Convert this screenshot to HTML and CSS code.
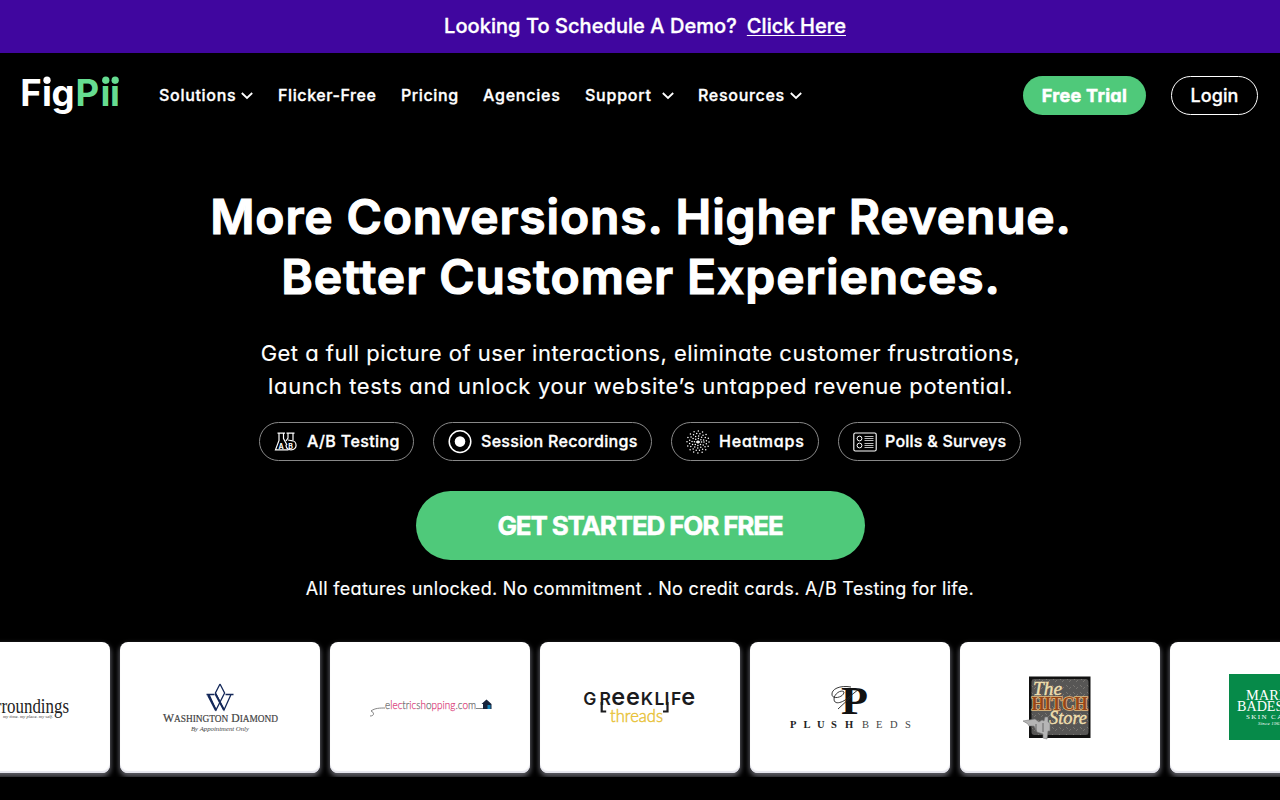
FILE: index.html
```html
<!DOCTYPE html>
<html lang="en">
<head>
<meta charset="utf-8">
<title>FigPii</title>
<link rel="stylesheet" href="styles.css">
</head>
<body>
<div class="banner"><span class="b1">Looking To Schedule A Demo?</span><a class="b2">Click Here</a></div>
<header class="header">
  <svg class="logo" width="100" height="42" viewBox="0 0 100 42">
    <text x="-1.800 19.900 29.400" y="30.500" fill="#fff">Fig</text><text x="53.500 78.600 87.900" y="30.500" fill="#66dc90">Pii</text>
    <circle cx="25" cy="5.200" r="3.600" fill="#fff"/><circle cx="83.800" cy="5.200" r="3.600" fill="#66dc90"/><circle cx="93.200" cy="5.200" r="3.600" fill="#66dc90"/>
  </svg>
  <nav class="nav">
    <a class="n1"><span>Solutions</span><svg class="chev" viewBox="0 0 12 8"><path d="M.8 1l5.200 5 5.200-5"/></svg></a>
    <a class="n2"><span>Flicker-Free</span></a>
    <a class="n3"><span>Pricing</span></a>
    <a class="n4"><span>Agencies</span></a>
    <a class="n5"><span>Support</span><svg class="chev" viewBox="0 0 12 8"><path d="M.8 1l5.200 5 5.200-5"/></svg></a>
    <a class="n6"><span>Resources</span><svg class="chev" viewBox="0 0 12 8"><path d="M.8 1l5.200 5 5.200-5"/></svg></a>
  </nav>
  <a class="trial">Free Trial</a>
  <a class="login">Login</a>
</header>
<main class="hero">
  <h1><span class="h1a">More Conversions. Higher Revenue.</span><br><span class="h1b">Better Customer Experiences.</span></h1>
  <p class="lead"><span class="l1">Get a full picture of user interactions, eliminate customer frustrations,</span><br><span class="l2">launch tests and unlock your website’s untapped revenue potential.</span></p>
  <div class="pills">
    <a class="pill p1">
      <svg width="24" height="24" viewBox="0 0 24 24" fill="none" stroke="#fff" stroke-width="1.200"><path d="M3.500 3.200h7.500M5 3.500v7L1.500 19.800h13M9.500 3.500v5L13 15M12.500 3.200h8M14 3.500v4.500L12 11M19 3.500v7"/><path d="M17 10.500c6.500 0 7 9.300 0 9.300-3 0-5-2-5-5M14 10l5 1"/><text x="4.600" y="18.700">A</text><text x="14.300" y="18.700">B</text></svg>
      <span>A/B Testing</span></a>
    <a class="pill p2">
      <svg width="24" height="24" viewBox="0 0 24 24"><circle cx="12" cy="11.600" r="10.800" fill="none" stroke="#fff" stroke-width="1.500"/><circle cx="12" cy="11.600" r="5.300" fill="#fff"/></svg>
      <span>Session Recordings</span></a>
    <a class="pill p3">
      <svg width="24" height="24" viewBox="0 0 24 24" fill="none" stroke="#fff" stroke-linecap="round" stroke-width="1.500"><circle cx="12" cy="12" r="11" stroke-dasharray="0 4.320"/><circle cx="12" cy="12" r="8.500" stroke-dasharray="0 3.338" stroke-dashoffset="1.600"/><circle cx="12" cy="12" r="6" stroke-dasharray="0 3.142"/><circle cx="12" cy="12" r="3.600" stroke-dasharray="0 2.827"/><path d="M12 11v2M10.500 12h3"/></svg>
      <span>Heatmaps</span></a>
    <a class="pill p4">
      <svg width="24" height="24" viewBox="0 0 24 24" fill="none" stroke="#fff"><rect x=".8" y="3" width="22.400" height="18" rx="1.500" stroke-width="1.100"/><circle cx="6.500" cy="8.500" r="2.400"/><circle cx="6.500" cy="15.500" r="2.400"/><path stroke="#bbb" d="M11.500 6.500h9M11.500 8.500h9M11.500 10.500h9M11.500 13.500h9M11.500 15.500h9M11.500 17.500h9"/></svg>
      <span>Polls &amp; Surveys</span></a>
  </div>
  <a class="cta">GET STARTED FOR FREE</a>
  <p class="note">All features unlocked. No commitment . No credit cards. A/B Testing for life.</p>
</main>
<section class="clients">
  <div class="card"><svg viewBox="0 0 200 131"><text class="serif" x="68" y="70.500" font-size="21" textLength="91" lengthAdjust="spacingAndGlyphs" fill="#222">Surroundings</text><text class="serif it" x="93" y="75.500" font-size="4.500" textLength="50" fill="#333">my time.  my place.  my self.</text></svg></div>
  <div class="card"><svg viewBox="0 0 200 131"><path d="M86.500 52.500h8M105.500 52.500h8M100 42l-4.600 9 8.600 17 7-15.500M100 42l4.600 9-8.600 17-7-15.500" stroke="#14285a" stroke-width="1.300" fill="none"/><path d="M88 53l8 15.500M95.500 52l8.500 16" stroke="#14285a" stroke-width="2"/><text class="serif" x="43" y="79.500" font-size="12.500" textLength="115" lengthAdjust="spacingAndGlyphs" fill="#444" stroke="#444" stroke-width=".2">W<tspan font-size="10">ASHINGTON</tspan> D<tspan font-size="10">IAMOND</tspan></text><text class="serif it" x="71" y="88.500" font-size="7" textLength="58" lengthAdjust="spacingAndGlyphs" fill="#444">By Appointment Only</text></svg></div>
  <div class="card"><svg viewBox="0 0 200 131"><path d="M40 74c5 0 4-4 1-5 4-3 9-3 14-3M146 66.500h7" fill="none" stroke="#666" stroke-width=".8"/><text class="thin" x="55" y="67" font-size="12.500" textLength="91" lengthAdjust="spacingAndGlyphs" fill="#666" stroke-width=".25" stroke="#777">e<tspan class="pk">lec</tspan>tr<tspan class="pk">ic</tspan>s<tspan class="pk">h</tspan>o<tspan class="pk">pping</tspan>.c<tspan class="pk">o</tspan>m</text><path d="M151.500 62l5-4.500 5 4.500v5h-8.500v-5z" fill="#17233b"/><path d="M157.500 63h3v4h-3z" fill="#1684b8"/></svg></div>
  <div class="card"><svg viewBox="0 0 200 131"><g class="geo" fill="#1b1b1d"><text x="43.200 59.500" y="62.500" font-size="17.500">GR</text><text x="71.300 86" y="62.500" font-size="23.500">ee</text><text x="100.800 114.500 124.500 131" y="62.500" font-size="17.500">KLIF</text><text x="141.300" y="62.500" font-size="23.500">e</text></g><path d="M61.700 60v9.500h4.500M127.500 60v9.500h-4.500" fill="none" stroke="#1b1b1d" stroke-width="2.200"/><text class="thin" x="70" y="79.500" font-size="18" textLength="53" lengthAdjust="spacingAndGlyphs" fill="#e8c33c" stroke="#e8c33c" stroke-width=".5">threads</text></svg></div>
  <div class="card"><svg viewBox="0 0 200 131"><text class="serif bd" x="91" y="71.500" font-size="41" textLength="27" lengthAdjust="spacingAndGlyphs" fill="#111">P</text><path d="M101 45c-11-2-20 2-19 8 1 5 12 2 12-3-3-3-10 2-10 7 0 7 10 3 15-2l10-8M88 67l14-13" fill="none" stroke="#222" stroke-width=".9"/><text class="serif bd" x="40 53.500 67 81 95" y="86" font-size="10.500" fill="#222">PLUSH</text><text class="serif" x="112 126 140 155" y="86" font-size="10.500" fill="#444">BEDS</text></svg></div>
  <div class="card"><svg viewBox="0 0 200 131"><defs><pattern id="plate" width="7" height="7" patternUnits="userSpaceOnUse"><path fill="#575655" d="M0 0h7v7H0z"/><path d="M1 1l2 2M6 3L4 5" stroke="#777571"/></pattern></defs><path fill="#111" d="M69 34.500h61.500V96H69z"/><rect x="71.500" y="37" width="57" height="56" rx="3" fill="url(#plate)"/><text class="serif it" x="73" y="52.500" font-size="19" textLength="29" lengthAdjust="spacingAndGlyphs" fill="#f0dfad" stroke="#f0dfad" stroke-width=".4">The</text><text class="serif bd" x="71.500" y="68" font-size="18" textLength="56" lengthAdjust="spacingAndGlyphs" fill="#974617" stroke="#e5bd80" stroke-width="1.500" paint-order="stroke">HITCH</text><text class="serif it" x="89" y="81.500" font-size="18" textLength="38" lengthAdjust="spacingAndGlyphs" fill="#f0dfad" stroke="#f0dfad" stroke-width=".4">Store</text><path d="M63 79l12-2 4 3 3-2 2 1 1-4h3v5l2 1v8h-2l-1 8-4-1v-4l-6-2-3-6h-5l-1-2z" fill="#b5b5b5" stroke="#777" stroke-width=".6"/><path d="M76 82v8M83 81v9" stroke="#666"/></svg></div>
  <div class="card"><svg viewBox="0 0 200 131"><path fill="#068a49" d="M59 32h82v66H59z"/><g class="serif" fill="#fff"><text x="76" y="57.500" font-size="14" textLength="48" lengthAdjust="spacingAndGlyphs">MARIO</text><text x="67" y="69.300" font-size="14" textLength="66" lengthAdjust="spacingAndGlyphs">BADESCU</text><text x="76" y="76.500" font-size="7" textLength="48">SKIN CARE</text><text class="it" x="88" y="82.500" font-size="5" textLength="24">Since 1967</text></g></svg></div>
</section>
</body>
</html>
```
FILE: styles.css
```css
* { box-sizing: border-box; }
body { margin: 0; background: #000; color: #fff; font-family: Inter, "Liberation Sans", sans-serif; font-feature-settings: "cv11"; height: 800px; overflow: hidden; -webkit-text-stroke: .15px currentColor; }
span, a { white-space: nowrap; }
.banner { height: 53px; padding: 0 0 1px 10px; background: #40069f; display: flex; justify-content: center; align-items: center; gap: 10px; font-size: 20px; font-weight: 500; letter-spacing: .06px; -webkit-text-stroke-width: .35px; }
.b2 { text-decoration: underline; text-underline-offset: 2px; text-decoration-thickness: 1px; }
.header { height: 85px; display: flex; align-items: center; padding: 0 22px; }
.logo { flex: none; margin-right: 37px; overflow: visible; }
.logo text { font: 700 36.5px Inter; stroke: none; }
.nav { display: flex; flex: 1; font-size: 16px; font-weight: 500; -webkit-text-stroke-width: .35px; }
.nav a { display: flex; align-items: center; justify-content: space-between; }
.nav span { margin-top: -2px; }
.n1 { width: 94px; margin-right: 25px; letter-spacing: .7px; }
.n2 { width: 98px; margin-right: 25px; letter-spacing: .6px; }
.n3 { width: 57px; margin-right: 25px; letter-spacing: .6px; }
.n4 { width: 77px; margin-right: 25px; letter-spacing: .78px; }
.n5 { width: 89px; margin-right: 24px; letter-spacing: .78px; }
.n6 { width: 104px; letter-spacing: .7px; }
.chev { width: 12px; height: 8px; fill: none; stroke: #fff; stroke-width: 1.8; }
.trial, .login { height: 39px; border-radius: 20px; display: flex; align-items: center; justify-content: center; font-size: 18px; }
.trial { width: 123px; background: #4fc97a; font-weight: 700; letter-spacing: .3px; margin-right: 25px; -webkit-text-stroke-width: .5px; }
.login { width: 87px; border: 1px solid #fff; font-weight: 500; letter-spacing: .1px; -webkit-text-stroke-width: .3px; }
.hero { display: flex; flex-direction: column; align-items: center; text-align: center; padding-top: 49px; }
h1 { margin: 0; padding-left: 2px; font-size: 48px; line-height: 60px; font-weight: 600; -webkit-text-stroke-width: 1.2px; }
.h1a { letter-spacing: .84px; }
.h1b { letter-spacing: .93px; }
.lead { margin: 30px 0 0; padding-left: 1px; font-size: 22px; line-height: 33px; }
.l1 { letter-spacing: .49px; }
.l2 { letter-spacing: .65px; }
.pills { display: flex; gap: 19px; margin-top: 19px; }
.pill { height: 39px; border: 1px solid #888; border-radius: 20px; display: flex; align-items: center; padding-left: 14px; gap: 9px; font-size: 16px; font-weight: 500; -webkit-text-stroke-width: .35px; }
.pill span { margin-top: -1px; }
.pill text { font: 700 7px Inter; fill: #fff; stroke: none; }
.p1 { width: 155px; letter-spacing: .39px; }
.p2 { width: 219px; letter-spacing: .32px; }
.p3 { width: 148px; letter-spacing: .8px; }
.p4 { width: 183px; gap: 8px; letter-spacing: .24px; }
.cta { margin-top: 30px; width: 449px; height: 69px; border-radius: 35px; background: #4fc97a; display: flex; align-items: center; justify-content: center; font-size: 26px; font-weight: 700; letter-spacing: -1.14px; -webkit-text-stroke-width: .5px; }
.note { margin: 15px 0 0; font-size: 18px; line-height: 27px; letter-spacing: .31px; }
.clients { display: flex; gap: 10px; margin-top: 30px; padding-top: 10px; height: 145px; width: 100%; overflow: hidden; }
.card { flex: none; width: 200px; height: 131px; border-radius: 8px; background: #fff; box-shadow: 0 3px 5px 1px rgba(200, 200, 215, .45), inset 0 -2px 1px #e4e4ec; }
.card:first-child { margin-left: -90px; }
.card svg { display: block; width: 200px; height: 131px; }
.serif { font-family: "Liberation Serif", serif; }
.it { font-style: italic; }
.bd { font-weight: 700; }
.thin { font-family: Lato, sans-serif; font-weight: 300; }
.pk { fill: #dc3f7c; stroke: #dc3f7c; }
.geo { font-family: Inter, sans-serif; font-weight: 600; }
```
